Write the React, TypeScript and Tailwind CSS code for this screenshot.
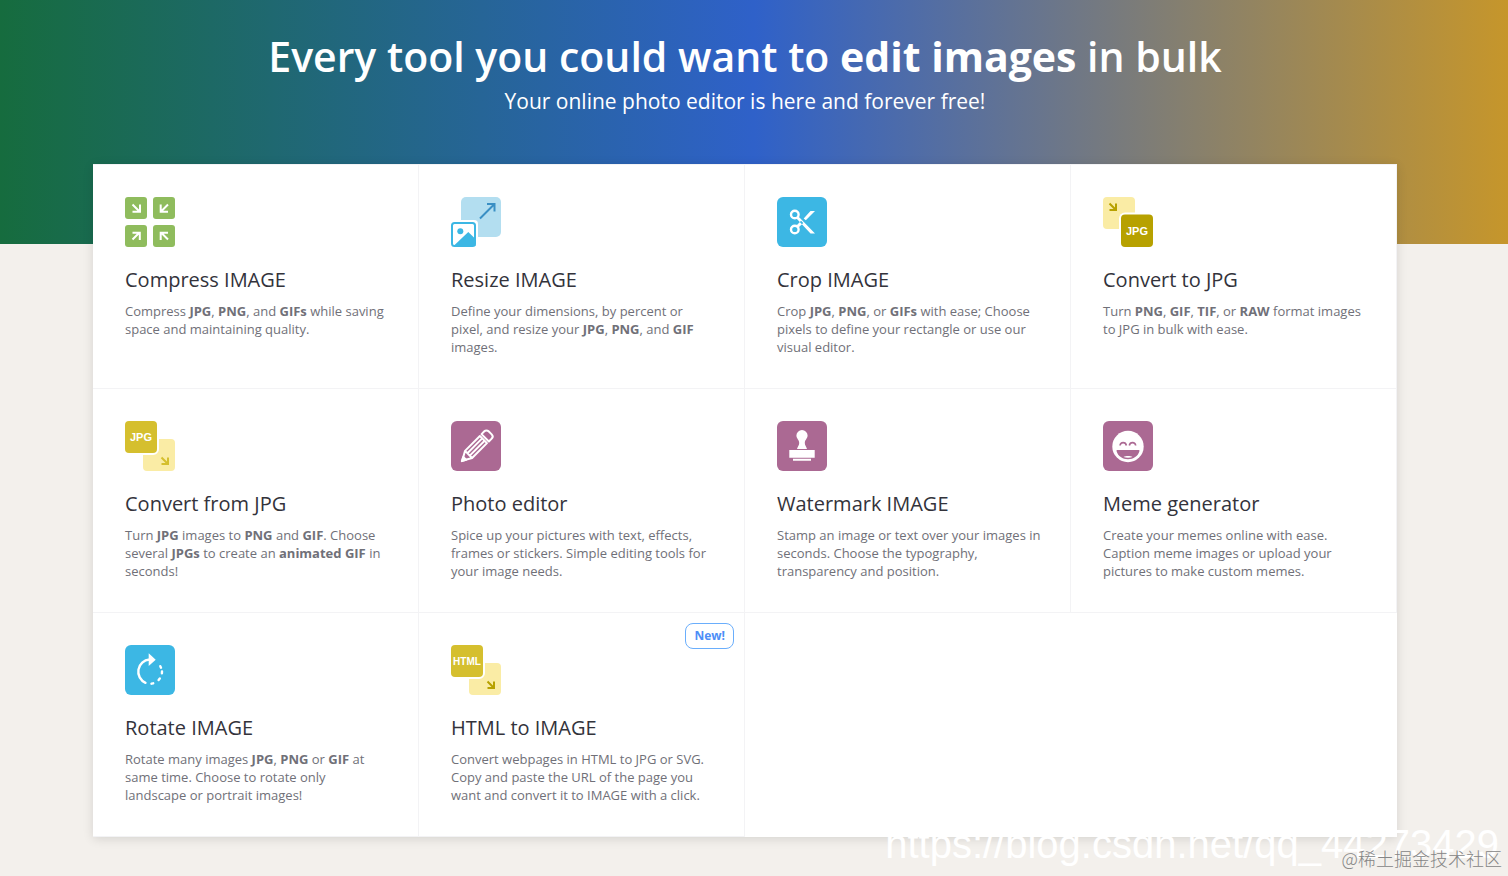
import type { ReactNode } from "react";

interface Tool {
  title: string;
  description: ReactNode;
  icon: ReactNode;
  isNew?: boolean;
}

const CompressIcon = () => (
  <svg width="50" height="50" viewBox="0 0 50 50" aria-hidden="true">
    <g fill="#8fbc5d">
      <rect width="22" height="22" rx="3" />
      <rect x="28" width="22" height="22" rx="3" />
      <rect y="28" width="22" height="22" rx="3" />
      <rect x="28" y="28" width="22" height="22" rx="3" />
    </g>
    <g fill="none" stroke="#fff" strokeWidth="2">
      <path d="M7.5 7.5l7 7M15 7.5v7.3H7.5" />
      <path d="M43 7.5l-7 7M35.7 7.5v7.3H43" />
      <path d="M7.5 42.5l7-7M7.5 35.7h7.3V43" />
      <path d="M43 42.5l-7-7M43 35.7h-7.3V43" />
    </g>
  </svg>
);

const ResizeIcon = () => (
  <svg width="50" height="50" viewBox="0 0 50 50" aria-hidden="true">
    <rect x="10" width="40" height="40" rx="5" fill="#b3def0" />
    <path d="M29 21.500L43 7.500M36 7h7.500v7.500" fill="none" stroke="#3a8fc4" strokeWidth="2" />
    <rect x="-2" y="23" width="29" height="29" rx="4" fill="#fff" />
    <rect x="1" y="26" width="23" height="23" rx="2.500" fill="#fff" stroke="#3cb7e4" strokeWidth="2" />
    <circle cx="9.300" cy="34.300" r="3" fill="#3cb7e4" />
    <path d="M2.500 49L17.300 35l7.200 7v7z" fill="#3cb7e4" />
  </svg>
);

const CropIcon = () => (
  <svg width="50" height="50" viewBox="0 0 50 50" aria-hidden="true">
    <rect width="50" height="50" rx="6" fill="#3cb7e4" />
    <g fill="none" stroke="#fff" strokeWidth="2.400">
      <circle cx="17.800" cy="17.500" r="3.800" />
      <circle cx="17.800" cy="32.500" r="3.800" />
    </g>
    <path d="M19.500 21.500l2-2L38 36.500h-4.500zM19.500 28.500l2 2 4.800-4.600-2.200-2.200zM26.700 21.400l6.800-7.400H38l-9.200 9.300z" fill="#fff" />
  </svg>
);

const ToJpgIcon = () => (
  <svg width="50" height="50" viewBox="0 0 50 50" aria-hidden="true">
    <rect width="32" height="32" rx="4" fill="#faeca5" />
    <path d="M6.500 6.500l6 6M13 6.500v6.500H6.500" fill="none" stroke="#b7a100" strokeWidth="2" />
    <rect x="16" y="15.500" width="36" height="36" rx="6" fill="#fff" />
    <rect x="18" y="17.500" width="32" height="32.500" rx="4" fill="#b7a100" />
    <text x="34" y="38" textAnchor="middle" fill="#fff" className="font-['Liberation_Sans',sans-serif] text-[11px] font-bold">JPG</text>
  </svg>
);

const FromIcon = ({ label, small = false }: { label: string; small?: boolean }) => (
  <svg width="50" height="50" viewBox="0 0 50 50" aria-hidden="true">
    <rect x="18" y="18" width="32" height="32" rx="4" fill="#faeca5" />
    <path d="M36.500 36.500l6 6M43 36.500v6.500h-6.500" fill="none" stroke={small ? "#b7a100" : "#d5bf2e"} strokeWidth="2" />
    <rect x="-2" y="-2" width="36" height="36" rx="6" fill="#fff" />
    <rect width="32" height="32" rx="4" fill="#d5bf2e" />
    <text
      x="16"
      y="20"
      textAnchor="middle"
      fill="#fff"
      className={`font-['Liberation_Sans',sans-serif] font-bold ${small ? "text-[10px]" : "text-[11px]"}`}
    >
      {label}
    </text>
  </svg>
);

const EditorIcon = () => (
  <svg width="50" height="50" viewBox="0 0 50 50" aria-hidden="true">
    <rect width="50" height="50" rx="6" fill="#ab6993" />
    <g transform="translate(10.5 40.5) rotate(-45)" fill="none" stroke="#fff" strokeWidth="2" strokeLinejoin="round">
      <path d="M1 0L10 -5H31V5H10zM10 -5V5M10 -1.700H31M10 1.700H31" />
      <path d="M33.500 -5.200h4a3 3 0 0 1 3 3v4.400a3 3 0 0 1-3 3h-4z" />
      <path d="M0.500 0L4.500 -2V2z" fill="#fff" />
    </g>
  </svg>
);

const WatermarkIcon = () => (
  <svg width="50" height="50" viewBox="0 0 50 50" aria-hidden="true">
    <rect width="50" height="50" rx="6" fill="#ab6993" />
    <path d="M25 9a5.600 5.600 0 0 1 5.600 5.600c0 3-2.800 4.300-2.800 7.400 0 2.500 1.700 3.700 2.200 6H20c.5-2.300 2.200-3.500 2.200-6 0-3.100-2.800-4.400-2.800-7.400A5.600 5.600 0 0 1 25 9z" fill="#fff" />
    <path d="M12.300 29h25.400v7.700H12.300zM16 37.700h18v2H16z" fill="#fff" />
  </svg>
);

const MemeIcon = () => (
  <svg width="50" height="50" viewBox="0 0 50 50" aria-hidden="true">
    <rect width="50" height="50" rx="6" fill="#ab6993" />
    <circle cx="25" cy="25.500" r="15.700" fill="#fff" />
    <path d="M17 24.500c.6-3.800 5.600-3.800 6.400 0M26.300 24.500c.8-3.800 5.800-3.800 6.400 0" fill="none" stroke="#ab6993" strokeWidth="1.600" />
    <path d="M14.300 29h21.400c.8 0 .9.700.7 1.300C34.900 35.400 30.500 38.200 25 38.200S15.100 35.400 13.600 30.300c-.2-.6-.1-1.300.7-1.300z" fill="#ab6993" />
    <path d="M20.500 36.100c2.300-1.400 6.700-1.400 9 0-2.500 1-6.500 1-9 0z" fill="#fff" />
  </svg>
);

const RotateIcon = () => (
  <svg width="50" height="50" viewBox="0 0 50 50" aria-hidden="true">
    <rect width="50" height="50" rx="6" fill="#3cb7e4" />
    <g fill="none" stroke="#fff" strokeWidth="2.400" strokeLinecap="round">
      <path d="M24.500 14.500a12.200 12.200 0 0 0-4 23.300" />
      <path d="M35.300 21.200l.7 1.500M37 26.500l-.1 1.900M34.800 33.500l-1.200 1.500M28.200 38.300l-1.700.4" />
    </g>
    <path d="M23.700 8.300v12.800l7-6.300z" fill="#fff" />
  </svg>
);

const tools: Tool[] = [
  {
    title: "Compress IMAGE",
    description: <>Compress <b>JPG</b>, <b>PNG</b>, and <b>GIFs</b> while saving space and maintaining quality.</>,
    icon: <CompressIcon />,
  },
  {
    title: "Resize IMAGE",
    description: <>Define your dimensions, by percent or pixel, and resize your <b>JPG</b>, <b>PNG</b>, and <b>GIF</b> images.</>,
    icon: <ResizeIcon />,
  },
  {
    title: "Crop IMAGE",
    description: <>Crop <b>JPG</b>, <b>PNG</b>, or <b>GIFs</b> with ease; Choose pixels to define your rectangle or use our visual editor.</>,
    icon: <CropIcon />,
  },
  {
    title: "Convert to JPG",
    description: <>Turn <b>PNG</b>, <b>GIF</b>, <b>TIF</b>, or <b>RAW</b> format images to JPG in bulk with ease.</>,
    icon: <ToJpgIcon />,
  },
  {
    title: "Convert from JPG",
    description: <>Turn <b>JPG</b> images to <b>PNG</b> and <b>GIF</b>. Choose several <b>JPGs</b> to create an <b>animated GIF</b> in seconds!</>,
    icon: <FromIcon label="JPG" />,
  },
  {
    title: "Photo editor",
    description: "Spice up your pictures with text, effects, frames or stickers. Simple editing tools for your image needs.",
    icon: <EditorIcon />,
  },
  {
    title: "Watermark IMAGE",
    description: "Stamp an image or text over your images in seconds. Choose the typography, transparency and position.",
    icon: <WatermarkIcon />,
  },
  {
    title: "Meme generator",
    description: "Create your memes online with ease. Caption meme images or upload your pictures to make custom memes.",
    icon: <MemeIcon />,
  },
  {
    title: "Rotate IMAGE",
    description: <>Rotate many images <b>JPG</b>, <b>PNG</b> or <b>GIF</b> at same time. Choose to rotate only landscape or portrait images!</>,
    icon: <RotateIcon />,
  },
  {
    title: "HTML to IMAGE",
    description: "Convert webpages in HTML to JPG or SVG. Copy and paste the URL of the page you want and convert it to IMAGE with a click.",
    icon: <FromIcon label="HTML" small />,
    isNew: true,
  },
];

function ToolCard({ tool }: { tool: Tool }) {
  return (
    <a href="#" className="relative block min-h-56 border-r border-b border-[#f3f3f5] pt-8 pr-7 pb-7 pl-8">
      {tool.icon}
      <h3 className="mt-5 text-[20px] leading-[26px] font-medium text-[#33333b]">{tool.title}</h3>
      <p className="mt-[9px] text-[13px] leading-[18px] text-[#707078]">{tool.description}</p>
      {tool.isNew && (
        <span className="absolute top-[10px] right-[10px] rounded-lg border border-[#6aaefc] px-2 text-[12px] leading-6 font-bold text-[#4d8ef7]">
          New!
        </span>
      )}
    </a>
  );
}

export default function App() {
  return (
    <div className="relative min-h-screen overflow-hidden bg-[#f3f0ec] pb-[39px] font-['Open_Sans',sans-serif]">
      <header className="bg-[linear-gradient(90deg,#166c3e_0%,#2f61c9_50%,#c6962b_100%)] pt-[31px] pr-[111px] pb-[129px] pl-[93px] text-center text-white">
        <h1 className="text-[41px] leading-[50px] font-semibold">
          Every tool you could want to <b className="font-bold">edit images</b> in bulk
        </h1>
        <h2 className="mt-[6px] text-[21px] leading-7">Your online photo editor is here and forever free!</h2>
      </header>

      <main className="-mt-20 pr-[111px] pl-[93px]">
        <div className="grid grid-cols-4 border-t border-[#f3f3f5] bg-white shadow-[0_2px_10px_rgba(0,0,0,0.12)]">
          {tools.map((tool) => (
            <ToolCard key={tool.title} tool={tool} />
          ))}
        </div>
      </main>

      <p className="absolute right-[9px] bottom-[9px] font-['Liberation_Sans',sans-serif] text-[40px] leading-[46px] text-white">
        https://blog.csdn.net/qq_44273429
      </p>
      <p className="absolute right-[6px] bottom-[6px] font-['Noto_Sans_CJK_SC',sans-serif] text-[18px] leading-6 font-light text-[#858585]">
        @稀土掘金技术社区
      </p>
    </div>
  );
}
